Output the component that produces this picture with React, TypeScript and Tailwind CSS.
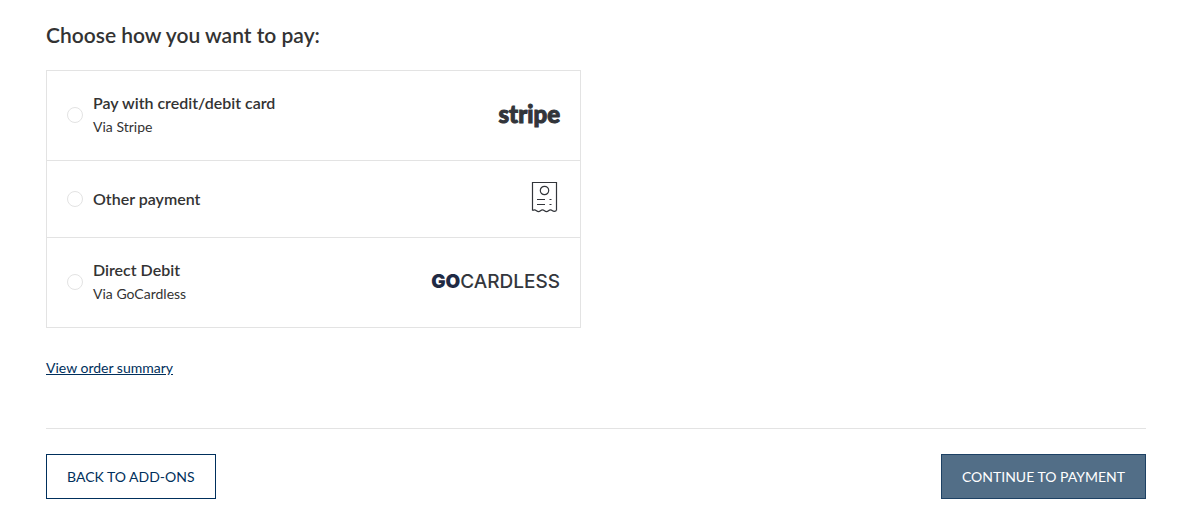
import type { ReactNode } from 'react';

type PaymentMethod = {
  id: string;
  title: string;
  via?: string;
  logo: ReactNode;
};

function StripeLogo() {
  return (
    <span className="pb-1 font-[Lato,sans-serif] text-2xl leading-6 font-black text-[#32353a] [-webkit-text-stroke:1px_#32353a]">
      stripe
    </span>
  );
}

function ReceiptIcon() {
  return (
    <svg
      className="mr-[2px] mb-1 h-8 w-[27px]"
      viewBox="0 0 27 32"
      fill="none"
      stroke="#32353a"
      strokeWidth="1.2"
      aria-hidden="true"
    >
      <path d="M1.5 29.5V1.5H25.5V29.5" />
      <path d="M1.5 29.5C3 28.5 4 28.5 5.5 29.7S8 31 9.5 29.7S12 28.5 13.5 29.7S16 31 17.5 29.7S20 28.5 21.5 29.7S24 30.5 25.5 29.5" />
      <circle cx="13.5" cy="9.5" r="4.2" />
      <path d="M6 18.5H14M6 23.5H14M18.5 18.5H20.5M18.5 23.5H20.5" />
    </svg>
  );
}

function GoCardlessLogo() {
  return (
    <span className="pb-[2px] font-[Inter,sans-serif] text-[19px] leading-6 font-medium text-[#34373d]">
      <span className="font-black text-[#1f2a44]">GO</span>CARDLESS
    </span>
  );
}

const methods: PaymentMethod[] = [
  { id: 'stripe', title: 'Pay with credit/debit card', via: 'Via Stripe', logo: <StripeLogo /> },
  { id: 'other', title: 'Other payment', logo: <ReceiptIcon /> },
  { id: 'gocardless', title: 'Direct Debit', via: 'Via GoCardless', logo: <GoCardlessLogo /> },
];

export default function App() {
  return (
    <main className="bg-white pt-5 pr-[35px] pb-2 pl-[46px] font-[Lato,sans-serif] text-sm text-[#333]">
      <h1 className="mb-5 text-[21px] leading-[30px] font-semibold">Choose how you want to pay:</h1>

      <div
        role="radiogroup"
        aria-label="Payment method"
        className="max-w-[535px] divide-y divide-[#e3e3e3] border border-[#e3e3e3]"
      >
        {methods.map((method) => (
          <label
            key={method.id}
            htmlFor={method.id}
            className="flex min-h-[77px] cursor-pointer items-center px-5 py-5"
          >
            <input
              id={method.id}
              type="radio"
              name="payment"
              className="mr-[10px] mb-px h-4 w-4 shrink-0 appearance-none rounded-full border border-[#e3e3e3] checked:border-4 checked:border-[#002f5c]"
            />
            <span className="flex-1">
              <span className="block text-base leading-6 font-semibold">{method.title}</span>
              {method.via && <span className="block pb-px leading-6">{method.via}</span>}
            </span>
            {method.logo}
          </label>
        ))}
      </div>

      <a href="#summary" className="mt-7 inline-block leading-6 text-[#002f5c] underline">
        View order summary
      </a>

      <div className="mt-12 flex items-center justify-between border-t border-[#e3e3e3] pt-[25px]">
        <button type="button" className="h-[45px] border border-[#002f5c] px-5 text-[#002f5c] uppercase">
          Back to add-ons
        </button>
        <button
          type="button"
          className="h-[45px] border border-[#1d4164] bg-[#526e87] px-5 text-white uppercase"
        >
          Continue to payment
        </button>
      </div>
    </main>
  );
}
